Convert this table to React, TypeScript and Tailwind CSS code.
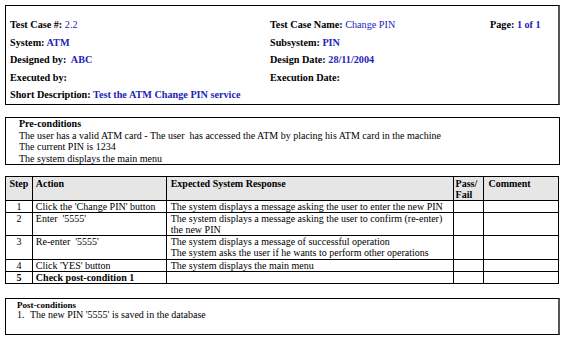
const serif = { fontFamily: '"Liberation Serif", "Times New Roman", serif' };

function Field({ label, value, bold = true }: { label: string; value?: string; bold?: boolean }) {
  return (
    <div className="whitespace-pre">
      <span className="font-bold text-black">{label}</span>
      {value && (
        <span className={bold ? "font-bold text-[#2323b8]" : "text-[#2323b8]"}> {value}</span>
      )}
    </div>
  );
}

const rows = [
  { step: "1", action: "Click the 'Change PIN' button", resp: ["The system displays a message asking the user to enter the new PIN"], h: "h-[12px]" },
  { step: "2", action: "Enter  '5555'", resp: ["The system displays a message asking the user to confirm (re-enter)", "the new PIN"], h: "h-[23px]" },
  { step: "3", action: "Re-enter  '5555'", resp: ["The system displays a message of successful operation", "The system asks the user if he wants to perform other operations"], h: "h-[24px]" },
  { step: "4", action: "Click 'YES' button", resp: ["The system displays the main menu"], h: "h-[12px]" },
];

export default function App() {
  return (
    <div className="w-[565px] h-[338px] bg-white text-black pl-[5px] pt-[5px]" style={serif}>
      {/* Header block */}
      <div className="w-[555px] h-[100px] border border-black border-r-2 border-r-[#555] flex pl-[4px] pt-[10px] text-[10.2px] leading-[17.5px]">
        <div className="w-[260px] flex flex-col">
          <Field label="Test Case #:" value="2.2" bold={false} />
          <Field label="System:" value="ATM" />
          <Field label="Designed by:" value=" ABC" />
          <Field label="Executed by:" />
          <Field label="Short Description:" value="Test the ATM Change PIN service" />
        </div>
        <div className="w-[220px] flex flex-col">
          <Field label="Test Case Name:" value="Change PIN" bold={false} />
          <Field label="Subsystem:" value="PIN" />
          <Field label="Design Date:" value="28/11/2004" />
          <Field label="Execution Date:" />
        </div>
        <div className="flex flex-col">
          <Field label="Page:" value="1 of 1" />
        </div>
      </div>

      {/* Pre-conditions */}
      <div className="mt-[12px] w-[555px] h-[48px] border border-black pl-[13px] text-[10px] leading-[11.5px]">
        <div className="font-bold">Pre-conditions</div>
        <div className="whitespace-pre">The user has a valid ATM card - The user  has accessed the ATM by placing his ATM card in the machine</div>
        <div>The current PIN is 1234</div>
        <div>The system displays the main menu</div>
      </div>

      {/* Steps table */}
      <table className="mt-[11px] w-[554px] border-collapse text-[10px] leading-[11px]">
        <colgroup>
          <col className="w-[27px]" />
          <col className="w-[134px]" />
          <col className="w-[287px]" />
          <col className="w-[31px]" />
          <col className="w-[75px]" />
        </colgroup>
        <thead>
          <tr className="h-[24px] bg-[#e6e6e6] align-top font-bold">
            <td className="border border-black text-center pt-[1px]">Step</td>
            <td className="border border-black px-[3px] pt-[1px]">Action</td>
            <td className="border border-black px-[4px] pt-[1px]">Expected System Response</td>
            <td className="border border-black px-[2px] pt-[1px]">Pass/ Fail</td>
            <td className="border border-black px-[4px] pt-[1px]">Comment</td>
          </tr>
        </thead>
        <tbody>
          {rows.map((r) => (
            <tr key={r.step} className={`${r.h} align-top`}>
              <td className="border border-black text-center">{r.step}</td>
              <td className="border border-black px-[3px] whitespace-pre">{r.action}</td>
              <td className="border border-black px-[4px]">
                {r.resp.map((l) => (
                  <div key={l} className="whitespace-nowrap">{l}</div>
                ))}
              </td>
              <td className="border border-black" />
              <td className="border border-black" />
            </tr>
          ))}
          <tr className="h-[11px] align-top font-bold">
            <td className="border border-black text-center">5</td>
            <td className="border border-black px-[3px]">Check post-condition 1</td>
            <td className="border border-black" />
            <td className="border border-black" />
            <td className="border border-black" />
          </tr>
        </tbody>
      </table>

      {/* Post-conditions */}
      <div className="mt-[14px] w-[555px] h-[37px] border border-black border-r-2 border-r-[#555] pl-[11px] pt-[1px] leading-[10px]">
        <div className="font-bold text-[9px]">Post-conditions</div>
        <div className="flex text-[10px]">
          <span className="w-[13px]">1.</span>
          <span className="whitespace-pre">The new PIN '5555' is saved in the database</span>
        </div>
      </div>
    </div>
  );
}
